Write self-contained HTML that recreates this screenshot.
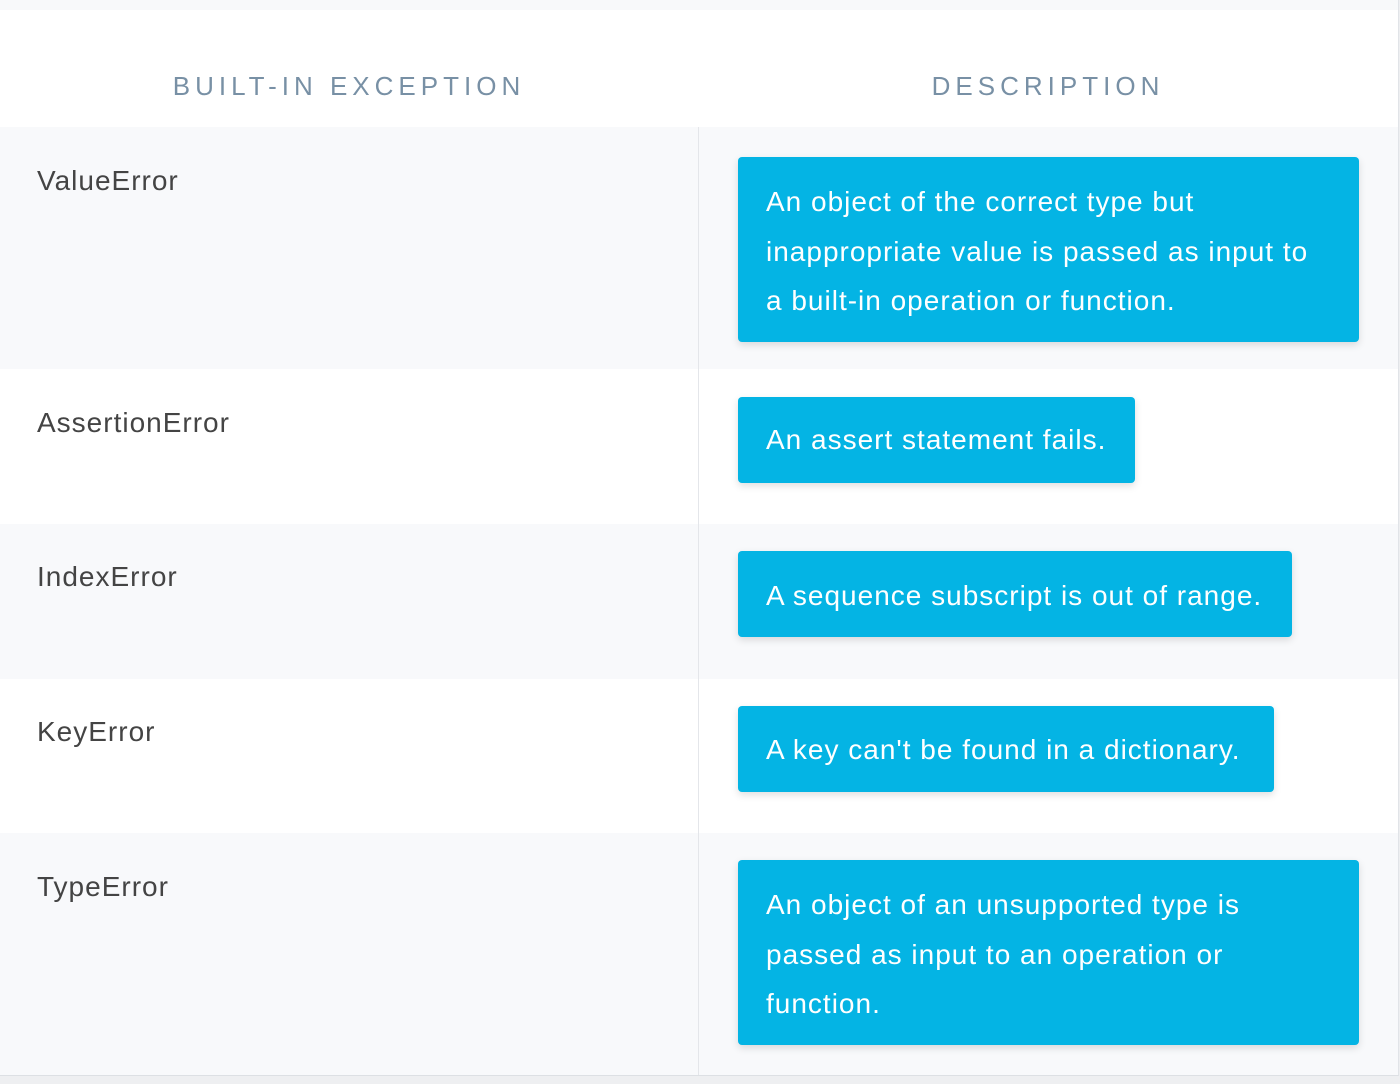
<!DOCTYPE html>
<html><head><style>
html,body{margin:0;padding:0;}
body{width:1400px;height:1084px;background:#eeeff1;font-family:"Liberation Sans",sans-serif;position:relative;overflow:hidden;}
.wrap{position:absolute;left:0;top:0;width:1398px;height:1075px;background:#fff;border-right:1px solid #e1e4e8;border-bottom:1px solid #dde0e4;}
.top{position:absolute;left:0;top:0;width:1398px;height:10px;background:#f8f9fa;}
.hd{position:absolute;top:71px;font-size:26px;letter-spacing:5px;color:#7890a5;text-align:center;width:698px;}
.row{position:absolute;left:0;width:1398px;}
.g{background:#f8f9fb;}
.name{position:absolute;left:37px;font-size:28px;letter-spacing:1px;color:#444;}
.div{position:absolute;left:698px;top:127px;width:1px;height:948px;background:#e4e6ea;}
.box{position:absolute;left:738px;background:#04b4e4;color:#fff;border-radius:4px;font-size:28px;letter-spacing:1px;line-height:49.5px;padding:19px 20px 0 28px;box-sizing:border-box;box-shadow:0 3px 8px rgba(0,0,0,0.13);white-space:nowrap;}
</style></head><body>
<div class="wrap">
<div class="top"></div>
<div class="hd" style="left:0">BUILT-IN EXCEPTION</div>
<div class="hd" style="left:698px;width:700px">DESCRIPTION</div>
<div class="row g" style="top:127px;height:242px"></div>
<div class="row" style="top:369px;height:155px"></div>
<div class="row g" style="top:524px;height:155px"></div>
<div class="row" style="top:679px;height:154px"></div>
<div class="row g" style="top:833px;height:242px"></div>
<div class="div"></div>
<div class="name" style="top:165px">ValueError</div>
<div class="name" style="top:407px">AssertionError</div>
<div class="name" style="top:561px">IndexError</div>
<div class="name" style="top:716px">KeyError</div>
<div class="name" style="top:871px">TypeError</div>
<div class="box" style="top:157px;width:621px;height:185px;padding-top:20px">An object of the correct type but<br>inappropriate value is passed as input to<br>a built-in operation or function.</div>
<div class="box" style="top:397px;width:397px;height:86px;padding-top:18px">An assert statement fails.</div>
<div class="box" style="top:551px;width:554px;height:86px;padding-top:20px">A sequence subscript is out of range.</div>
<div class="box" style="top:706px;width:536px;height:86px;padding-top:19px">A key can't be found in a dictionary.</div>
<div class="box" style="top:860px;width:621px;height:185px;padding-top:20px">An object of an unsupported type is<br>passed as input to an operation or<br>function.</div>
</div>
</body></html>
